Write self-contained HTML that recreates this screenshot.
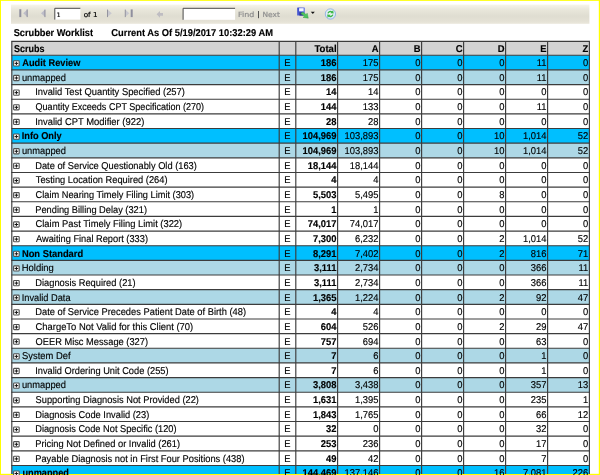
<!DOCTYPE html>
<html><head><meta charset="utf-8"><title>Scrubber Worklist</title>
<style>text{text-rendering:geometricPrecision;stroke:#000;stroke-width:.14px}#tbtext text{stroke-width:.2px}#tbtext text[fill]{stroke:#8f8f8f}html,body{margin:0;padding:0;background:#fff;width:600px;height:475px;overflow:hidden}</style></head>
<body>
<svg width="600" height="475" viewBox="0 0 600 475" style="display:block;position:absolute;left:0;top:0;will-change:transform" font-family="'Liberation Sans', sans-serif" font-size="9.9" fill="#000">
<defs><linearGradient id="tb" x1="0" y1="0" x2="0" y2="1"><stop offset="0" stop-color="#f6f4ea"/><stop offset="0.25" stop-color="#e9e7db"/><stop offset="0.6" stop-color="#dfddd1"/><stop offset="0.85" stop-color="#e4e1d5"/><stop offset="1" stop-color="#eae7db"/></linearGradient><linearGradient id="sv" x1="0" y1="0" x2="1" y2="0.3"><stop offset="0" stop-color="#3646c8"/><stop offset="1" stop-color="#6878ea"/></linearGradient><radialGradient id="rf" cx="0.5" cy="0.4" r="0.6"><stop offset="0" stop-color="#ffffff"/><stop offset="1" stop-color="#cfe0f6"/></radialGradient></defs>
<rect x="0" y="0" width="600" height="475" fill="#ffff00"/>
<rect x="1" y="0.85" width="597.8" height="472.95" fill="#ffffff"/>
<rect x="11" y="4.6" width="578.4" height="19.2" fill="url(#tb)"/>
<g id="toolbar" stroke="none">
<g fill="#a4a4b2">
<rect x="19.3" y="9.2" width="2" height="7.9" fill="#8f8f9e"/><path d="M27.4 9.4 L27.4 17.1 L23.2 13.25 Z" fill="#bdbdc8"/><rect x="26.7" y="9.4" width="0.9" height="7.7" fill="#8a8a98"/>
<path d="M45.2 9.6 L45.2 17.1 L41 13.35 Z" fill="#bdbdc8"/><rect x="44.5" y="9.6" width="0.9" height="7.5" fill="#8a8a98"/>
<path d="M107.4 9.6 L107.4 17.1 L111.8 13.35 Z" fill="#c8c8cf"/><rect x="107.1" y="9.6" width="0.9" height="7.5" fill="#8d8d99"/>
<path d="M125.1 9.6 L125.1 17.1 L129.3 13.35 Z" fill="#c8c8cf"/><rect x="124.8" y="9.6" width="0.9" height="7.5" fill="#8d8d99"/><rect x="130.7" y="9.4" width="2" height="7.7" fill="#8f8f9e"/>
<path d="M156.6 14.3 L160 10.9 L160 12.9 L163 12.9 L163 15.7 L160 15.7 L160 17.7 Z" fill="#bfbdc2"/>
</g>
<rect x="54.8" y="8.3" width="25.6" height="11.3" fill="#fff"/>
<path d="M54.8 19.6 V8.3 H80.4" fill="none" stroke="#4a4a4a" stroke-width="1"/>
<rect x="183.1" y="8.3" width="52" height="11.5" fill="#fff"/>
<path d="M183.1 19.8 V8.3 H235.1" fill="none" stroke="#4a4a4a" stroke-width="1"/>
<rect x="258" y="11" width="0.9" height="7.2" fill="#444"/>
<g id="save"><rect x="297.2" y="7.6" width="7.6" height="8" rx="0.4" fill="url(#sv)"/><rect x="299.1" y="8.2" width="4.5" height="3.1" fill="#f4f6ff"/><rect x="299.4" y="12.3" width="3.8" height="3.3" fill="#2a3590"/><path d="M300.7 13.6 L302.9 11.9 L306 14.4 L307.2 13.2 L308.3 18.2 L303 17.4 L304.4 16.2 Z" fill="#4ec45e" stroke="#2f9a40" stroke-width="0.4"/></g>
<path d="M310.8 11.7 L314.8 11.7 L312.8 14.1 Z" fill="#111"/>
<g id="refresh"><circle cx="330.4" cy="14" r="5.15" fill="url(#rf)" stroke="#8fb2e0" stroke-width="0.9"/><path d="M327.3 13.3 A3.4 3.4 0 0 1 332.2 11.2 L333.1 10.2 L333.7 13.6 L330.2 13.2 L331.2 12.3 A2.2 2.2 0 0 0 328.6 13.5 Z" fill="#3cb848"/><path d="M333.5 14.7 A3.4 3.4 0 0 1 328.6 16.8 L327.7 17.8 L327.1 14.4 L330.6 14.8 L329.6 15.7 A2.2 2.2 0 0 0 332.2 14.5 Z" fill="#3cb848"/></g>
</g>

<g id="tbtext">
<text transform="translate(56.75 16.80) scale(0.9640 1)" font-size="6.2" font-family="DejaVu Sans, sans-serif">1</text>
<text transform="translate(83.70 16.80) scale(1.0475 1)" font-size="6.9" font-family="DejaVu Sans, sans-serif">of 1</text>
<text transform="translate(237.91 17.10) scale(1.1126 1)" font-size="7.2" font-family="DejaVu Sans, sans-serif" fill="#8f8f8f">Find</text>
<text transform="translate(262.47 17.10) scale(1.0374 1)" font-size="7.2" font-family="DejaVu Sans, sans-serif" fill="#8f8f8f">Next</text>
</g>
<text transform="translate(13.64 36.10) scale(0.9351 1)" font-size="9.9" font-weight="bold">Scrubber Worklist</text>
<text transform="translate(111.32 36.10) scale(0.9447 1)" font-size="9.9" font-weight="bold">Current As Of 5/19/2017 10:32:29 AM</text>
<rect x="11.80" y="41.40" width="577.60" height="13.85" fill="#d3d3d3"/>
<rect x="11.80" y="55.25" width="577.60" height="14.65" fill="#00bfff"/>
<rect x="11.80" y="69.90" width="577.60" height="14.65" fill="#add8e6"/>
<rect x="11.80" y="128.50" width="577.60" height="14.65" fill="#00bfff"/>
<rect x="11.80" y="143.15" width="577.60" height="14.65" fill="#add8e6"/>
<rect x="11.80" y="245.70" width="577.60" height="14.65" fill="#00bfff"/>
<rect x="11.80" y="260.35" width="577.60" height="14.65" fill="#add8e6"/>
<rect x="11.80" y="289.65" width="577.60" height="14.65" fill="#add8e6"/>
<rect x="11.80" y="348.25" width="577.60" height="14.65" fill="#add8e6"/>
<rect x="11.80" y="377.55" width="577.60" height="14.65" fill="#add8e6"/>
<rect x="11.80" y="465.45" width="577.60" height="8.55" fill="#00bfff"/>
<g stroke="#3c3c3c" stroke-width="1.15" fill="none">
<line x1="11.25" y1="41.40" x2="589.95" y2="41.40"/>
<line x1="11.25" y1="55.25" x2="589.95" y2="55.25"/>
<line x1="11.25" y1="69.90" x2="589.95" y2="69.90"/>
<line x1="11.25" y1="84.55" x2="589.95" y2="84.55"/>
<line x1="11.25" y1="99.20" x2="589.95" y2="99.20"/>
<line x1="11.25" y1="113.85" x2="589.95" y2="113.85"/>
<line x1="11.25" y1="128.50" x2="589.95" y2="128.50"/>
<line x1="11.25" y1="143.15" x2="589.95" y2="143.15"/>
<line x1="11.25" y1="157.80" x2="589.95" y2="157.80"/>
<line x1="11.25" y1="172.45" x2="589.95" y2="172.45"/>
<line x1="11.25" y1="187.10" x2="589.95" y2="187.10"/>
<line x1="11.25" y1="201.75" x2="589.95" y2="201.75"/>
<line x1="11.25" y1="216.40" x2="589.95" y2="216.40"/>
<line x1="11.25" y1="231.05" x2="589.95" y2="231.05"/>
<line x1="11.25" y1="245.70" x2="589.95" y2="245.70"/>
<line x1="11.25" y1="260.35" x2="589.95" y2="260.35"/>
<line x1="11.25" y1="275.00" x2="589.95" y2="275.00"/>
<line x1="11.25" y1="289.65" x2="589.95" y2="289.65"/>
<line x1="11.25" y1="304.30" x2="589.95" y2="304.30"/>
<line x1="11.25" y1="318.95" x2="589.95" y2="318.95"/>
<line x1="11.25" y1="333.60" x2="589.95" y2="333.60"/>
<line x1="11.25" y1="348.25" x2="589.95" y2="348.25"/>
<line x1="11.25" y1="362.90" x2="589.95" y2="362.90"/>
<line x1="11.25" y1="377.55" x2="589.95" y2="377.55"/>
<line x1="11.25" y1="392.20" x2="589.95" y2="392.20"/>
<line x1="11.25" y1="406.85" x2="589.95" y2="406.85"/>
<line x1="11.25" y1="421.50" x2="589.95" y2="421.50"/>
<line x1="11.25" y1="436.15" x2="589.95" y2="436.15"/>
<line x1="11.25" y1="450.80" x2="589.95" y2="450.80"/>
<line x1="11.25" y1="465.45" x2="589.95" y2="465.45"/>
<line x1="11.80" y1="41.40" x2="11.80" y2="474"/>
<line x1="279.20" y1="41.40" x2="279.20" y2="474"/>
<line x1="295.80" y1="41.40" x2="295.80" y2="474"/>
<line x1="337.60" y1="41.40" x2="337.60" y2="474"/>
<line x1="379.60" y1="41.40" x2="379.60" y2="474"/>
<line x1="421.60" y1="41.40" x2="421.60" y2="474"/>
<line x1="463.60" y1="41.40" x2="463.60" y2="474"/>
<line x1="505.60" y1="41.40" x2="505.60" y2="474"/>
<line x1="547.60" y1="41.40" x2="547.60" y2="474"/>
<line x1="589.40" y1="41.40" x2="589.40" y2="474"/>
</g>
<text transform="translate(14.05 51.60) scale(0.9092 1)" font-size="9.9" font-weight="bold">Scrubs</text>
<text transform="translate(314.39 51.60) scale(0.9721 1)" font-size="9.9" font-weight="bold">Total</text>
<text transform="translate(371.71 51.60) scale(0.9500 1)" font-size="9.9" font-weight="bold">A</text>
<text transform="translate(413.71 51.60) scale(0.9500 1)" font-size="9.9" font-weight="bold">B</text>
<text transform="translate(455.71 51.60) scale(0.9500 1)" font-size="9.9" font-weight="bold">C</text>
<text transform="translate(497.71 51.60) scale(0.9500 1)" font-size="9.9" font-weight="bold">D</text>
<text transform="translate(540.23 51.60) scale(0.9500 1)" font-size="9.9" font-weight="bold">E</text>
<text transform="translate(582.56 51.60) scale(0.9500 1)" font-size="9.9" font-weight="bold">Z</text>
<rect x="13.60" y="60.75" width="5.6" height="5.2" rx="0.8" fill="#fff" stroke="#505050" stroke-width="1.1"/><path d="M14.60 63.35 h3.6 M16.40 61.65 v3.4" stroke="#111" stroke-width="1" fill="none"/>
<text transform="translate(22.28 66.15) scale(0.9363 1)" font-size="9.9" font-weight="bold">Audit Review</text>
<text transform="translate(284.18 66.15) scale(0.9500 1)" font-size="9.9">E</text>
<text transform="translate(320.81 66.15) scale(0.9500 1)" font-size="9.9" font-weight="bold">186</text>
<text transform="translate(362.81 66.15) scale(0.9500 1)" font-size="9.9">175</text>
<text transform="translate(415.27 66.15) scale(0.9500 1)" font-size="9.9">0</text>
<text transform="translate(457.27 66.15) scale(0.9500 1)" font-size="9.9">0</text>
<text transform="translate(499.27 66.15) scale(0.9500 1)" font-size="9.9">0</text>
<text transform="translate(536.74 66.15) scale(0.9500 1)" font-size="9.9">11</text>
<text transform="translate(583.07 66.15) scale(0.9500 1)" font-size="9.9">0</text>
<rect x="13.60" y="75.40" width="5.6" height="5.2" rx="0.8" fill="#fff" stroke="#505050" stroke-width="1.1"/><path d="M14.60 78.00 h3.6 M16.40 76.30 v3.4" stroke="#111" stroke-width="1" fill="none"/>
<text transform="translate(21.90 80.80) scale(0.9446 1)" font-size="9.9">unmapped</text>
<text transform="translate(284.18 80.80) scale(0.9500 1)" font-size="9.9">E</text>
<text transform="translate(320.81 80.80) scale(0.9500 1)" font-size="9.9" font-weight="bold">186</text>
<text transform="translate(362.81 80.80) scale(0.9500 1)" font-size="9.9">175</text>
<text transform="translate(415.27 80.80) scale(0.9500 1)" font-size="9.9">0</text>
<text transform="translate(457.27 80.80) scale(0.9500 1)" font-size="9.9">0</text>
<text transform="translate(499.27 80.80) scale(0.9500 1)" font-size="9.9">0</text>
<text transform="translate(536.74 80.80) scale(0.9500 1)" font-size="9.9">11</text>
<text transform="translate(583.07 80.80) scale(0.9500 1)" font-size="9.9">0</text>
<rect x="13.60" y="90.05" width="5.6" height="5.2" rx="0.8" fill="#fff" stroke="#505050" stroke-width="1.1"/><path d="M14.60 92.65 h3.6 M16.40 90.95 v3.4" stroke="#111" stroke-width="1" fill="none"/>
<text transform="translate(35.14 95.45) scale(0.9485 1)" font-size="9.9">Invalid Test Quantity Specified (257)</text>
<text transform="translate(284.18 95.45) scale(0.9500 1)" font-size="9.9">E</text>
<text transform="translate(326.04 95.45) scale(0.9500 1)" font-size="9.9" font-weight="bold">14</text>
<text transform="translate(368.04 95.45) scale(0.9500 1)" font-size="9.9">14</text>
<text transform="translate(415.27 95.45) scale(0.9500 1)" font-size="9.9">0</text>
<text transform="translate(457.27 95.45) scale(0.9500 1)" font-size="9.9">0</text>
<text transform="translate(499.27 95.45) scale(0.9500 1)" font-size="9.9">0</text>
<text transform="translate(541.27 95.45) scale(0.9500 1)" font-size="9.9">0</text>
<text transform="translate(583.07 95.45) scale(0.9500 1)" font-size="9.9">0</text>
<rect x="13.60" y="104.70" width="5.6" height="5.2" rx="0.8" fill="#fff" stroke="#505050" stroke-width="1.1"/><path d="M14.60 107.30 h3.6 M16.40 105.60 v3.4" stroke="#111" stroke-width="1" fill="none"/>
<text transform="translate(35.57 110.10) scale(0.9149 1)" font-size="9.9">Quantity Exceeds CPT Specification (270)</text>
<text transform="translate(284.18 110.10) scale(0.9500 1)" font-size="9.9">E</text>
<text transform="translate(320.81 110.10) scale(0.9500 1)" font-size="9.9" font-weight="bold">144</text>
<text transform="translate(362.81 110.10) scale(0.9500 1)" font-size="9.9">133</text>
<text transform="translate(415.27 110.10) scale(0.9500 1)" font-size="9.9">0</text>
<text transform="translate(457.27 110.10) scale(0.9500 1)" font-size="9.9">0</text>
<text transform="translate(499.27 110.10) scale(0.9500 1)" font-size="9.9">0</text>
<text transform="translate(536.74 110.10) scale(0.9500 1)" font-size="9.9">11</text>
<text transform="translate(583.07 110.10) scale(0.9500 1)" font-size="9.9">0</text>
<rect x="13.60" y="119.35" width="5.6" height="5.2" rx="0.8" fill="#fff" stroke="#505050" stroke-width="1.1"/><path d="M14.60 121.95 h3.6 M16.40 120.25 v3.4" stroke="#111" stroke-width="1" fill="none"/>
<text transform="translate(35.13 124.75) scale(0.9533 1)" font-size="9.9">Invalid CPT Modifier (922)</text>
<text transform="translate(284.18 124.75) scale(0.9500 1)" font-size="9.9">E</text>
<text transform="translate(326.04 124.75) scale(0.9500 1)" font-size="9.9" font-weight="bold">28</text>
<text transform="translate(368.04 124.75) scale(0.9500 1)" font-size="9.9">28</text>
<text transform="translate(415.27 124.75) scale(0.9500 1)" font-size="9.9">0</text>
<text transform="translate(457.27 124.75) scale(0.9500 1)" font-size="9.9">0</text>
<text transform="translate(499.27 124.75) scale(0.9500 1)" font-size="9.9">0</text>
<text transform="translate(541.27 124.75) scale(0.9500 1)" font-size="9.9">0</text>
<text transform="translate(583.07 124.75) scale(0.9500 1)" font-size="9.9">0</text>
<rect x="13.60" y="134.00" width="5.6" height="5.2" rx="0.8" fill="#fff" stroke="#505050" stroke-width="1.1"/><path d="M14.60 136.60 h3.6 M16.40 134.90 v3.4" stroke="#111" stroke-width="1" fill="none"/>
<text transform="translate(21.69 139.40) scale(0.9338 1)" font-size="9.9" font-weight="bold">Info Only</text>
<text transform="translate(284.18 139.40) scale(0.9500 1)" font-size="9.9">E</text>
<text transform="translate(302.50 139.40) scale(0.9500 1)" font-size="9.9" font-weight="bold">104,969</text>
<text transform="translate(344.50 139.40) scale(0.9500 1)" font-size="9.9">103,893</text>
<text transform="translate(415.27 139.40) scale(0.9500 1)" font-size="9.9">0</text>
<text transform="translate(457.27 139.40) scale(0.9500 1)" font-size="9.9">0</text>
<text transform="translate(494.04 139.40) scale(0.9500 1)" font-size="9.9">10</text>
<text transform="translate(522.96 139.40) scale(0.9500 1)" font-size="9.9">1,014</text>
<text transform="translate(577.84 139.40) scale(0.9500 1)" font-size="9.9">52</text>
<rect x="13.60" y="148.65" width="5.6" height="5.2" rx="0.8" fill="#fff" stroke="#505050" stroke-width="1.1"/><path d="M14.60 151.25 h3.6 M16.40 149.55 v3.4" stroke="#111" stroke-width="1" fill="none"/>
<text transform="translate(21.90 154.05) scale(0.9446 1)" font-size="9.9">unmapped</text>
<text transform="translate(284.18 154.05) scale(0.9500 1)" font-size="9.9">E</text>
<text transform="translate(302.50 154.05) scale(0.9500 1)" font-size="9.9" font-weight="bold">104,969</text>
<text transform="translate(344.50 154.05) scale(0.9500 1)" font-size="9.9">103,893</text>
<text transform="translate(415.27 154.05) scale(0.9500 1)" font-size="9.9">0</text>
<text transform="translate(457.27 154.05) scale(0.9500 1)" font-size="9.9">0</text>
<text transform="translate(494.04 154.05) scale(0.9500 1)" font-size="9.9">10</text>
<text transform="translate(522.96 154.05) scale(0.9500 1)" font-size="9.9">1,014</text>
<text transform="translate(577.84 154.05) scale(0.9500 1)" font-size="9.9">52</text>
<rect x="13.60" y="163.30" width="5.6" height="5.2" rx="0.8" fill="#fff" stroke="#505050" stroke-width="1.1"/><path d="M14.60 165.90 h3.6 M16.40 164.20 v3.4" stroke="#111" stroke-width="1" fill="none"/>
<text transform="translate(35.24 168.70) scale(0.9408 1)" font-size="9.9">Date of Service Questionably Old (163)</text>
<text transform="translate(284.18 168.70) scale(0.9500 1)" font-size="9.9">E</text>
<text transform="translate(307.73 168.70) scale(0.9500 1)" font-size="9.9" font-weight="bold">18,144</text>
<text transform="translate(349.73 168.70) scale(0.9500 1)" font-size="9.9">18,144</text>
<text transform="translate(415.27 168.70) scale(0.9500 1)" font-size="9.9">0</text>
<text transform="translate(457.27 168.70) scale(0.9500 1)" font-size="9.9">0</text>
<text transform="translate(499.27 168.70) scale(0.9500 1)" font-size="9.9">0</text>
<text transform="translate(541.27 168.70) scale(0.9500 1)" font-size="9.9">0</text>
<text transform="translate(583.07 168.70) scale(0.9500 1)" font-size="9.9">0</text>
<rect x="13.60" y="177.95" width="5.6" height="5.2" rx="0.8" fill="#fff" stroke="#505050" stroke-width="1.1"/><path d="M14.60 180.55 h3.6 M16.40 178.85 v3.4" stroke="#111" stroke-width="1" fill="none"/>
<text transform="translate(35.80 183.35) scale(0.9412 1)" font-size="9.9">Testing Location Required (264)</text>
<text transform="translate(284.18 183.35) scale(0.9500 1)" font-size="9.9">E</text>
<text transform="translate(331.27 183.35) scale(0.9500 1)" font-size="9.9" font-weight="bold">4</text>
<text transform="translate(373.27 183.35) scale(0.9500 1)" font-size="9.9">4</text>
<text transform="translate(415.27 183.35) scale(0.9500 1)" font-size="9.9">0</text>
<text transform="translate(457.27 183.35) scale(0.9500 1)" font-size="9.9">0</text>
<text transform="translate(499.27 183.35) scale(0.9500 1)" font-size="9.9">0</text>
<text transform="translate(541.27 183.35) scale(0.9500 1)" font-size="9.9">0</text>
<text transform="translate(583.07 183.35) scale(0.9500 1)" font-size="9.9">0</text>
<rect x="13.60" y="192.60" width="5.6" height="5.2" rx="0.8" fill="#fff" stroke="#505050" stroke-width="1.1"/><path d="M14.60 195.20 h3.6 M16.40 193.50 v3.4" stroke="#111" stroke-width="1" fill="none"/>
<text transform="translate(35.54 198.00) scale(0.9355 1)" font-size="9.9">Claim Nearing Timely Filing Limit (303)</text>
<text transform="translate(284.18 198.00) scale(0.9500 1)" font-size="9.9">E</text>
<text transform="translate(312.96 198.00) scale(0.9500 1)" font-size="9.9" font-weight="bold">5,503</text>
<text transform="translate(354.96 198.00) scale(0.9500 1)" font-size="9.9">5,495</text>
<text transform="translate(415.27 198.00) scale(0.9500 1)" font-size="9.9">0</text>
<text transform="translate(457.27 198.00) scale(0.9500 1)" font-size="9.9">0</text>
<text transform="translate(499.27 198.00) scale(0.9500 1)" font-size="9.9">8</text>
<text transform="translate(541.27 198.00) scale(0.9500 1)" font-size="9.9">0</text>
<text transform="translate(583.07 198.00) scale(0.9500 1)" font-size="9.9">0</text>
<rect x="13.60" y="207.25" width="5.6" height="5.2" rx="0.8" fill="#fff" stroke="#505050" stroke-width="1.1"/><path d="M14.60 209.85 h3.6 M16.40 208.15 v3.4" stroke="#111" stroke-width="1" fill="none"/>
<text transform="translate(35.24 212.65) scale(0.9382 1)" font-size="9.9">Pending Billing Delay (321)</text>
<text transform="translate(284.18 212.65) scale(0.9500 1)" font-size="9.9">E</text>
<text transform="translate(331.27 212.65) scale(0.9500 1)" font-size="9.9" font-weight="bold">1</text>
<text transform="translate(373.27 212.65) scale(0.9500 1)" font-size="9.9">1</text>
<text transform="translate(415.27 212.65) scale(0.9500 1)" font-size="9.9">0</text>
<text transform="translate(457.27 212.65) scale(0.9500 1)" font-size="9.9">0</text>
<text transform="translate(499.27 212.65) scale(0.9500 1)" font-size="9.9">0</text>
<text transform="translate(541.27 212.65) scale(0.9500 1)" font-size="9.9">0</text>
<text transform="translate(583.07 212.65) scale(0.9500 1)" font-size="9.9">0</text>
<rect x="13.60" y="221.90" width="5.6" height="5.2" rx="0.8" fill="#fff" stroke="#505050" stroke-width="1.1"/><path d="M14.60 224.50 h3.6 M16.40 222.80 v3.4" stroke="#111" stroke-width="1" fill="none"/>
<text transform="translate(35.53 227.30) scale(0.9478 1)" font-size="9.9">Claim Past Timely Filing Limit (322)</text>
<text transform="translate(284.18 227.30) scale(0.9500 1)" font-size="9.9">E</text>
<text transform="translate(307.73 227.30) scale(0.9500 1)" font-size="9.9" font-weight="bold">74,017</text>
<text transform="translate(349.73 227.30) scale(0.9500 1)" font-size="9.9">74,017</text>
<text transform="translate(415.27 227.30) scale(0.9500 1)" font-size="9.9">0</text>
<text transform="translate(457.27 227.30) scale(0.9500 1)" font-size="9.9">0</text>
<text transform="translate(499.27 227.30) scale(0.9500 1)" font-size="9.9">0</text>
<text transform="translate(541.27 227.30) scale(0.9500 1)" font-size="9.9">0</text>
<text transform="translate(583.07 227.30) scale(0.9500 1)" font-size="9.9">0</text>
<rect x="13.60" y="236.55" width="5.6" height="5.2" rx="0.8" fill="#fff" stroke="#505050" stroke-width="1.1"/><path d="M14.60 239.15 h3.6 M16.40 237.45 v3.4" stroke="#111" stroke-width="1" fill="none"/>
<text transform="translate(35.98 241.95) scale(0.9375 1)" font-size="9.9">Awaiting Final Report (333)</text>
<text transform="translate(284.18 241.95) scale(0.9500 1)" font-size="9.9">E</text>
<text transform="translate(312.96 241.95) scale(0.9500 1)" font-size="9.9" font-weight="bold">7,300</text>
<text transform="translate(354.96 241.95) scale(0.9500 1)" font-size="9.9">6,232</text>
<text transform="translate(415.27 241.95) scale(0.9500 1)" font-size="9.9">0</text>
<text transform="translate(457.27 241.95) scale(0.9500 1)" font-size="9.9">0</text>
<text transform="translate(499.27 241.95) scale(0.9500 1)" font-size="9.9">2</text>
<text transform="translate(522.96 241.95) scale(0.9500 1)" font-size="9.9">1,014</text>
<text transform="translate(577.84 241.95) scale(0.9500 1)" font-size="9.9">52</text>
<rect x="13.60" y="251.20" width="5.6" height="5.2" rx="0.8" fill="#fff" stroke="#505050" stroke-width="1.1"/><path d="M14.60 253.80 h3.6 M16.40 252.10 v3.4" stroke="#111" stroke-width="1" fill="none"/>
<text transform="translate(21.88 256.60) scale(0.9466 1)" font-size="9.9" font-weight="bold">Non Standard</text>
<text transform="translate(284.18 256.60) scale(0.9500 1)" font-size="9.9">E</text>
<text transform="translate(312.96 256.60) scale(0.9500 1)" font-size="9.9" font-weight="bold">8,291</text>
<text transform="translate(354.96 256.60) scale(0.9500 1)" font-size="9.9">7,402</text>
<text transform="translate(415.27 256.60) scale(0.9500 1)" font-size="9.9">0</text>
<text transform="translate(457.27 256.60) scale(0.9500 1)" font-size="9.9">0</text>
<text transform="translate(499.27 256.60) scale(0.9500 1)" font-size="9.9">2</text>
<text transform="translate(530.81 256.60) scale(0.9500 1)" font-size="9.9">816</text>
<text transform="translate(577.84 256.60) scale(0.9500 1)" font-size="9.9">71</text>
<rect x="13.60" y="265.85" width="5.6" height="5.2" rx="0.8" fill="#fff" stroke="#505050" stroke-width="1.1"/><path d="M14.60 268.45 h3.6 M16.40 266.75 v3.4" stroke="#111" stroke-width="1" fill="none"/>
<text transform="translate(21.72 271.25) scale(0.9587 1)" font-size="9.9">Holding</text>
<text transform="translate(284.18 271.25) scale(0.9500 1)" font-size="9.9">E</text>
<text transform="translate(314.00 271.25) scale(0.9500 1)" font-size="9.9" font-weight="bold">3,111</text>
<text transform="translate(354.96 271.25) scale(0.9500 1)" font-size="9.9">2,734</text>
<text transform="translate(415.27 271.25) scale(0.9500 1)" font-size="9.9">0</text>
<text transform="translate(457.27 271.25) scale(0.9500 1)" font-size="9.9">0</text>
<text transform="translate(499.27 271.25) scale(0.9500 1)" font-size="9.9">0</text>
<text transform="translate(530.81 271.25) scale(0.9500 1)" font-size="9.9">366</text>
<text transform="translate(578.54 271.25) scale(0.9500 1)" font-size="9.9">11</text>
<rect x="13.60" y="280.50" width="5.6" height="5.2" rx="0.8" fill="#fff" stroke="#505050" stroke-width="1.1"/><path d="M14.60 283.10 h3.6 M16.40 281.40 v3.4" stroke="#111" stroke-width="1" fill="none"/>
<text transform="translate(35.23 285.90) scale(0.9428 1)" font-size="9.9">Diagnosis Required (21)</text>
<text transform="translate(284.18 285.90) scale(0.9500 1)" font-size="9.9">E</text>
<text transform="translate(314.00 285.90) scale(0.9500 1)" font-size="9.9" font-weight="bold">3,111</text>
<text transform="translate(354.96 285.90) scale(0.9500 1)" font-size="9.9">2,734</text>
<text transform="translate(415.27 285.90) scale(0.9500 1)" font-size="9.9">0</text>
<text transform="translate(457.27 285.90) scale(0.9500 1)" font-size="9.9">0</text>
<text transform="translate(499.27 285.90) scale(0.9500 1)" font-size="9.9">0</text>
<text transform="translate(530.81 285.90) scale(0.9500 1)" font-size="9.9">366</text>
<text transform="translate(578.54 285.90) scale(0.9500 1)" font-size="9.9">11</text>
<rect x="13.60" y="295.15" width="5.6" height="5.2" rx="0.8" fill="#fff" stroke="#505050" stroke-width="1.1"/><path d="M14.60 297.75 h3.6 M16.40 296.05 v3.4" stroke="#111" stroke-width="1" fill="none"/>
<text transform="translate(21.65 300.55) scale(0.9381 1)" font-size="9.9">Invalid Data</text>
<text transform="translate(284.18 300.55) scale(0.9500 1)" font-size="9.9">E</text>
<text transform="translate(312.96 300.55) scale(0.9500 1)" font-size="9.9" font-weight="bold">1,365</text>
<text transform="translate(354.96 300.55) scale(0.9500 1)" font-size="9.9">1,224</text>
<text transform="translate(415.27 300.55) scale(0.9500 1)" font-size="9.9">0</text>
<text transform="translate(457.27 300.55) scale(0.9500 1)" font-size="9.9">0</text>
<text transform="translate(499.27 300.55) scale(0.9500 1)" font-size="9.9">2</text>
<text transform="translate(536.04 300.55) scale(0.9500 1)" font-size="9.9">92</text>
<text transform="translate(577.84 300.55) scale(0.9500 1)" font-size="9.9">47</text>
<rect x="13.60" y="309.80" width="5.6" height="5.2" rx="0.8" fill="#fff" stroke="#505050" stroke-width="1.1"/><path d="M14.60 312.40 h3.6 M16.40 310.70 v3.4" stroke="#111" stroke-width="1" fill="none"/>
<text transform="translate(35.23 315.20) scale(0.9437 1)" font-size="9.9">Date of Service Precedes Patient Date of Birth (48)</text>
<text transform="translate(284.18 315.20) scale(0.9500 1)" font-size="9.9">E</text>
<text transform="translate(331.27 315.20) scale(0.9500 1)" font-size="9.9" font-weight="bold">4</text>
<text transform="translate(373.27 315.20) scale(0.9500 1)" font-size="9.9">4</text>
<text transform="translate(415.27 315.20) scale(0.9500 1)" font-size="9.9">0</text>
<text transform="translate(457.27 315.20) scale(0.9500 1)" font-size="9.9">0</text>
<text transform="translate(499.27 315.20) scale(0.9500 1)" font-size="9.9">0</text>
<text transform="translate(541.27 315.20) scale(0.9500 1)" font-size="9.9">0</text>
<text transform="translate(583.07 315.20) scale(0.9500 1)" font-size="9.9">0</text>
<rect x="13.60" y="324.45" width="5.6" height="5.2" rx="0.8" fill="#fff" stroke="#505050" stroke-width="1.1"/><path d="M14.60 327.05 h3.6 M16.40 325.35 v3.4" stroke="#111" stroke-width="1" fill="none"/>
<text transform="translate(35.53 329.85) scale(0.9522 1)" font-size="9.9">ChargeTo Not Valid for this Client (70)</text>
<text transform="translate(284.18 329.85) scale(0.9500 1)" font-size="9.9">E</text>
<text transform="translate(320.81 329.85) scale(0.9500 1)" font-size="9.9" font-weight="bold">604</text>
<text transform="translate(362.81 329.85) scale(0.9500 1)" font-size="9.9">526</text>
<text transform="translate(415.27 329.85) scale(0.9500 1)" font-size="9.9">0</text>
<text transform="translate(457.27 329.85) scale(0.9500 1)" font-size="9.9">0</text>
<text transform="translate(499.27 329.85) scale(0.9500 1)" font-size="9.9">2</text>
<text transform="translate(536.04 329.85) scale(0.9500 1)" font-size="9.9">29</text>
<text transform="translate(577.84 329.85) scale(0.9500 1)" font-size="9.9">47</text>
<rect x="13.60" y="339.10" width="5.6" height="5.2" rx="0.8" fill="#fff" stroke="#505050" stroke-width="1.1"/><path d="M14.60 341.70 h3.6 M16.40 340.00 v3.4" stroke="#111" stroke-width="1" fill="none"/>
<text transform="translate(35.56 344.50) scale(0.9398 1)" font-size="9.9">OEER Misc Message (327)</text>
<text transform="translate(284.18 344.50) scale(0.9500 1)" font-size="9.9">E</text>
<text transform="translate(320.81 344.50) scale(0.9500 1)" font-size="9.9" font-weight="bold">757</text>
<text transform="translate(362.81 344.50) scale(0.9500 1)" font-size="9.9">694</text>
<text transform="translate(415.27 344.50) scale(0.9500 1)" font-size="9.9">0</text>
<text transform="translate(457.27 344.50) scale(0.9500 1)" font-size="9.9">0</text>
<text transform="translate(499.27 344.50) scale(0.9500 1)" font-size="9.9">0</text>
<text transform="translate(536.04 344.50) scale(0.9500 1)" font-size="9.9">63</text>
<text transform="translate(583.07 344.50) scale(0.9500 1)" font-size="9.9">0</text>
<rect x="13.60" y="353.75" width="5.6" height="5.2" rx="0.8" fill="#fff" stroke="#505050" stroke-width="1.1"/><path d="M14.60 356.35 h3.6 M16.40 354.65 v3.4" stroke="#111" stroke-width="1" fill="none"/>
<text transform="translate(22.08 359.15) scale(0.9500 1)" font-size="9.9">System Def</text>
<text transform="translate(284.18 359.15) scale(0.9500 1)" font-size="9.9">E</text>
<text transform="translate(331.27 359.15) scale(0.9500 1)" font-size="9.9" font-weight="bold">7</text>
<text transform="translate(373.27 359.15) scale(0.9500 1)" font-size="9.9">6</text>
<text transform="translate(415.27 359.15) scale(0.9500 1)" font-size="9.9">0</text>
<text transform="translate(457.27 359.15) scale(0.9500 1)" font-size="9.9">0</text>
<text transform="translate(499.27 359.15) scale(0.9500 1)" font-size="9.9">0</text>
<text transform="translate(541.27 359.15) scale(0.9500 1)" font-size="9.9">1</text>
<text transform="translate(583.07 359.15) scale(0.9500 1)" font-size="9.9">0</text>
<rect x="13.60" y="368.40" width="5.6" height="5.2" rx="0.8" fill="#fff" stroke="#505050" stroke-width="1.1"/><path d="M14.60 371.00 h3.6 M16.40 369.30 v3.4" stroke="#111" stroke-width="1" fill="none"/>
<text transform="translate(35.15 373.80) scale(0.9383 1)" font-size="9.9">Invalid Ordering Unit Code (255)</text>
<text transform="translate(284.18 373.80) scale(0.9500 1)" font-size="9.9">E</text>
<text transform="translate(331.27 373.80) scale(0.9500 1)" font-size="9.9" font-weight="bold">7</text>
<text transform="translate(373.27 373.80) scale(0.9500 1)" font-size="9.9">6</text>
<text transform="translate(415.27 373.80) scale(0.9500 1)" font-size="9.9">0</text>
<text transform="translate(457.27 373.80) scale(0.9500 1)" font-size="9.9">0</text>
<text transform="translate(499.27 373.80) scale(0.9500 1)" font-size="9.9">0</text>
<text transform="translate(541.27 373.80) scale(0.9500 1)" font-size="9.9">1</text>
<text transform="translate(583.07 373.80) scale(0.9500 1)" font-size="9.9">0</text>
<rect x="13.60" y="383.05" width="5.6" height="5.2" rx="0.8" fill="#fff" stroke="#505050" stroke-width="1.1"/><path d="M14.60 385.65 h3.6 M16.40 383.95 v3.4" stroke="#111" stroke-width="1" fill="none"/>
<text transform="translate(21.90 388.45) scale(0.9446 1)" font-size="9.9">unmapped</text>
<text transform="translate(284.18 388.45) scale(0.9500 1)" font-size="9.9">E</text>
<text transform="translate(312.96 388.45) scale(0.9500 1)" font-size="9.9" font-weight="bold">3,808</text>
<text transform="translate(354.96 388.45) scale(0.9500 1)" font-size="9.9">3,438</text>
<text transform="translate(415.27 388.45) scale(0.9500 1)" font-size="9.9">0</text>
<text transform="translate(457.27 388.45) scale(0.9500 1)" font-size="9.9">0</text>
<text transform="translate(499.27 388.45) scale(0.9500 1)" font-size="9.9">0</text>
<text transform="translate(530.81 388.45) scale(0.9500 1)" font-size="9.9">357</text>
<text transform="translate(577.84 388.45) scale(0.9500 1)" font-size="9.9">13</text>
<rect x="13.60" y="397.70" width="5.6" height="5.2" rx="0.8" fill="#fff" stroke="#505050" stroke-width="1.1"/><path d="M14.60 400.30 h3.6 M16.40 398.60 v3.4" stroke="#111" stroke-width="1" fill="none"/>
<text transform="translate(35.58 403.10) scale(0.9384 1)" font-size="9.9">Supporting Diagnosis Not Provided (22)</text>
<text transform="translate(284.18 403.10) scale(0.9500 1)" font-size="9.9">E</text>
<text transform="translate(312.96 403.10) scale(0.9500 1)" font-size="9.9" font-weight="bold">1,631</text>
<text transform="translate(354.96 403.10) scale(0.9500 1)" font-size="9.9">1,395</text>
<text transform="translate(415.27 403.10) scale(0.9500 1)" font-size="9.9">0</text>
<text transform="translate(457.27 403.10) scale(0.9500 1)" font-size="9.9">0</text>
<text transform="translate(499.27 403.10) scale(0.9500 1)" font-size="9.9">0</text>
<text transform="translate(530.81 403.10) scale(0.9500 1)" font-size="9.9">235</text>
<text transform="translate(583.07 403.10) scale(0.9500 1)" font-size="9.9">1</text>
<rect x="13.60" y="412.35" width="5.6" height="5.2" rx="0.8" fill="#fff" stroke="#505050" stroke-width="1.1"/><path d="M14.60 414.95 h3.6 M16.40 413.25 v3.4" stroke="#111" stroke-width="1" fill="none"/>
<text transform="translate(35.24 417.75) scale(0.9402 1)" font-size="9.9">Diagnosis Code Invalid (23)</text>
<text transform="translate(284.18 417.75) scale(0.9500 1)" font-size="9.9">E</text>
<text transform="translate(312.96 417.75) scale(0.9500 1)" font-size="9.9" font-weight="bold">1,843</text>
<text transform="translate(354.96 417.75) scale(0.9500 1)" font-size="9.9">1,765</text>
<text transform="translate(415.27 417.75) scale(0.9500 1)" font-size="9.9">0</text>
<text transform="translate(457.27 417.75) scale(0.9500 1)" font-size="9.9">0</text>
<text transform="translate(499.27 417.75) scale(0.9500 1)" font-size="9.9">0</text>
<text transform="translate(536.04 417.75) scale(0.9500 1)" font-size="9.9">66</text>
<text transform="translate(577.84 417.75) scale(0.9500 1)" font-size="9.9">12</text>
<rect x="13.60" y="427.00" width="5.6" height="5.2" rx="0.8" fill="#fff" stroke="#505050" stroke-width="1.1"/><path d="M14.60 429.60 h3.6 M16.40 427.90 v3.4" stroke="#111" stroke-width="1" fill="none"/>
<text transform="translate(35.24 432.40) scale(0.9360 1)" font-size="9.9">Diagnosis Code Not Specific (120)</text>
<text transform="translate(284.18 432.40) scale(0.9500 1)" font-size="9.9">E</text>
<text transform="translate(326.04 432.40) scale(0.9500 1)" font-size="9.9" font-weight="bold">32</text>
<text transform="translate(373.27 432.40) scale(0.9500 1)" font-size="9.9">0</text>
<text transform="translate(415.27 432.40) scale(0.9500 1)" font-size="9.9">0</text>
<text transform="translate(457.27 432.40) scale(0.9500 1)" font-size="9.9">0</text>
<text transform="translate(499.27 432.40) scale(0.9500 1)" font-size="9.9">0</text>
<text transform="translate(536.04 432.40) scale(0.9500 1)" font-size="9.9">32</text>
<text transform="translate(583.07 432.40) scale(0.9500 1)" font-size="9.9">0</text>
<rect x="13.60" y="441.65" width="5.6" height="5.2" rx="0.8" fill="#fff" stroke="#505050" stroke-width="1.1"/><path d="M14.60 444.25 h3.6 M16.40 442.55 v3.4" stroke="#111" stroke-width="1" fill="none"/>
<text transform="translate(35.24 447.05) scale(0.9420 1)" font-size="9.9">Pricing Not Defined or Invalid (261)</text>
<text transform="translate(284.18 447.05) scale(0.9500 1)" font-size="9.9">E</text>
<text transform="translate(320.81 447.05) scale(0.9500 1)" font-size="9.9" font-weight="bold">253</text>
<text transform="translate(362.81 447.05) scale(0.9500 1)" font-size="9.9">236</text>
<text transform="translate(415.27 447.05) scale(0.9500 1)" font-size="9.9">0</text>
<text transform="translate(457.27 447.05) scale(0.9500 1)" font-size="9.9">0</text>
<text transform="translate(499.27 447.05) scale(0.9500 1)" font-size="9.9">0</text>
<text transform="translate(536.04 447.05) scale(0.9500 1)" font-size="9.9">17</text>
<text transform="translate(583.07 447.05) scale(0.9500 1)" font-size="9.9">0</text>
<rect x="13.60" y="456.30" width="5.6" height="5.2" rx="0.8" fill="#fff" stroke="#505050" stroke-width="1.1"/><path d="M14.60 458.90 h3.6 M16.40 457.20 v3.4" stroke="#111" stroke-width="1" fill="none"/>
<text transform="translate(35.24 461.70) scale(0.9416 1)" font-size="9.9">Payable Diagnosis not in First Four Positions (438)</text>
<text transform="translate(284.18 461.70) scale(0.9500 1)" font-size="9.9">E</text>
<text transform="translate(326.04 461.70) scale(0.9500 1)" font-size="9.9" font-weight="bold">49</text>
<text transform="translate(368.04 461.70) scale(0.9500 1)" font-size="9.9">42</text>
<text transform="translate(415.27 461.70) scale(0.9500 1)" font-size="9.9">0</text>
<text transform="translate(457.27 461.70) scale(0.9500 1)" font-size="9.9">0</text>
<text transform="translate(499.27 461.70) scale(0.9500 1)" font-size="9.9">0</text>
<text transform="translate(541.27 461.70) scale(0.9500 1)" font-size="9.9">7</text>
<text transform="translate(583.07 461.70) scale(0.9500 1)" font-size="9.9">0</text>
<rect x="13.60" y="470.95" width="5.6" height="5.2" rx="0.8" fill="#fff" stroke="#505050" stroke-width="1.1"/><path d="M14.60 473.55 h3.6 M16.40 471.85 v3.4" stroke="#111" stroke-width="1" fill="none"/>
<text transform="translate(22.43 476.35) scale(0.9326 1)" font-size="9.9" font-weight="bold">unmapped</text>
<text transform="translate(284.18 476.35) scale(0.9500 1)" font-size="9.9">E</text>
<text transform="translate(302.50 476.35) scale(0.9500 1)" font-size="9.9" font-weight="bold">144,469</text>
<text transform="translate(344.50 476.35) scale(0.9500 1)" font-size="9.9">137,146</text>
<text transform="translate(415.27 476.35) scale(0.9500 1)" font-size="9.9">0</text>
<text transform="translate(457.27 476.35) scale(0.9500 1)" font-size="9.9">0</text>
<text transform="translate(494.04 476.35) scale(0.9500 1)" font-size="9.9">16</text>
<text transform="translate(522.96 476.35) scale(0.9500 1)" font-size="9.9">7,081</text>
<text transform="translate(572.61 476.35) scale(0.9500 1)" font-size="9.9">226</text>
</svg>
</body></html>
